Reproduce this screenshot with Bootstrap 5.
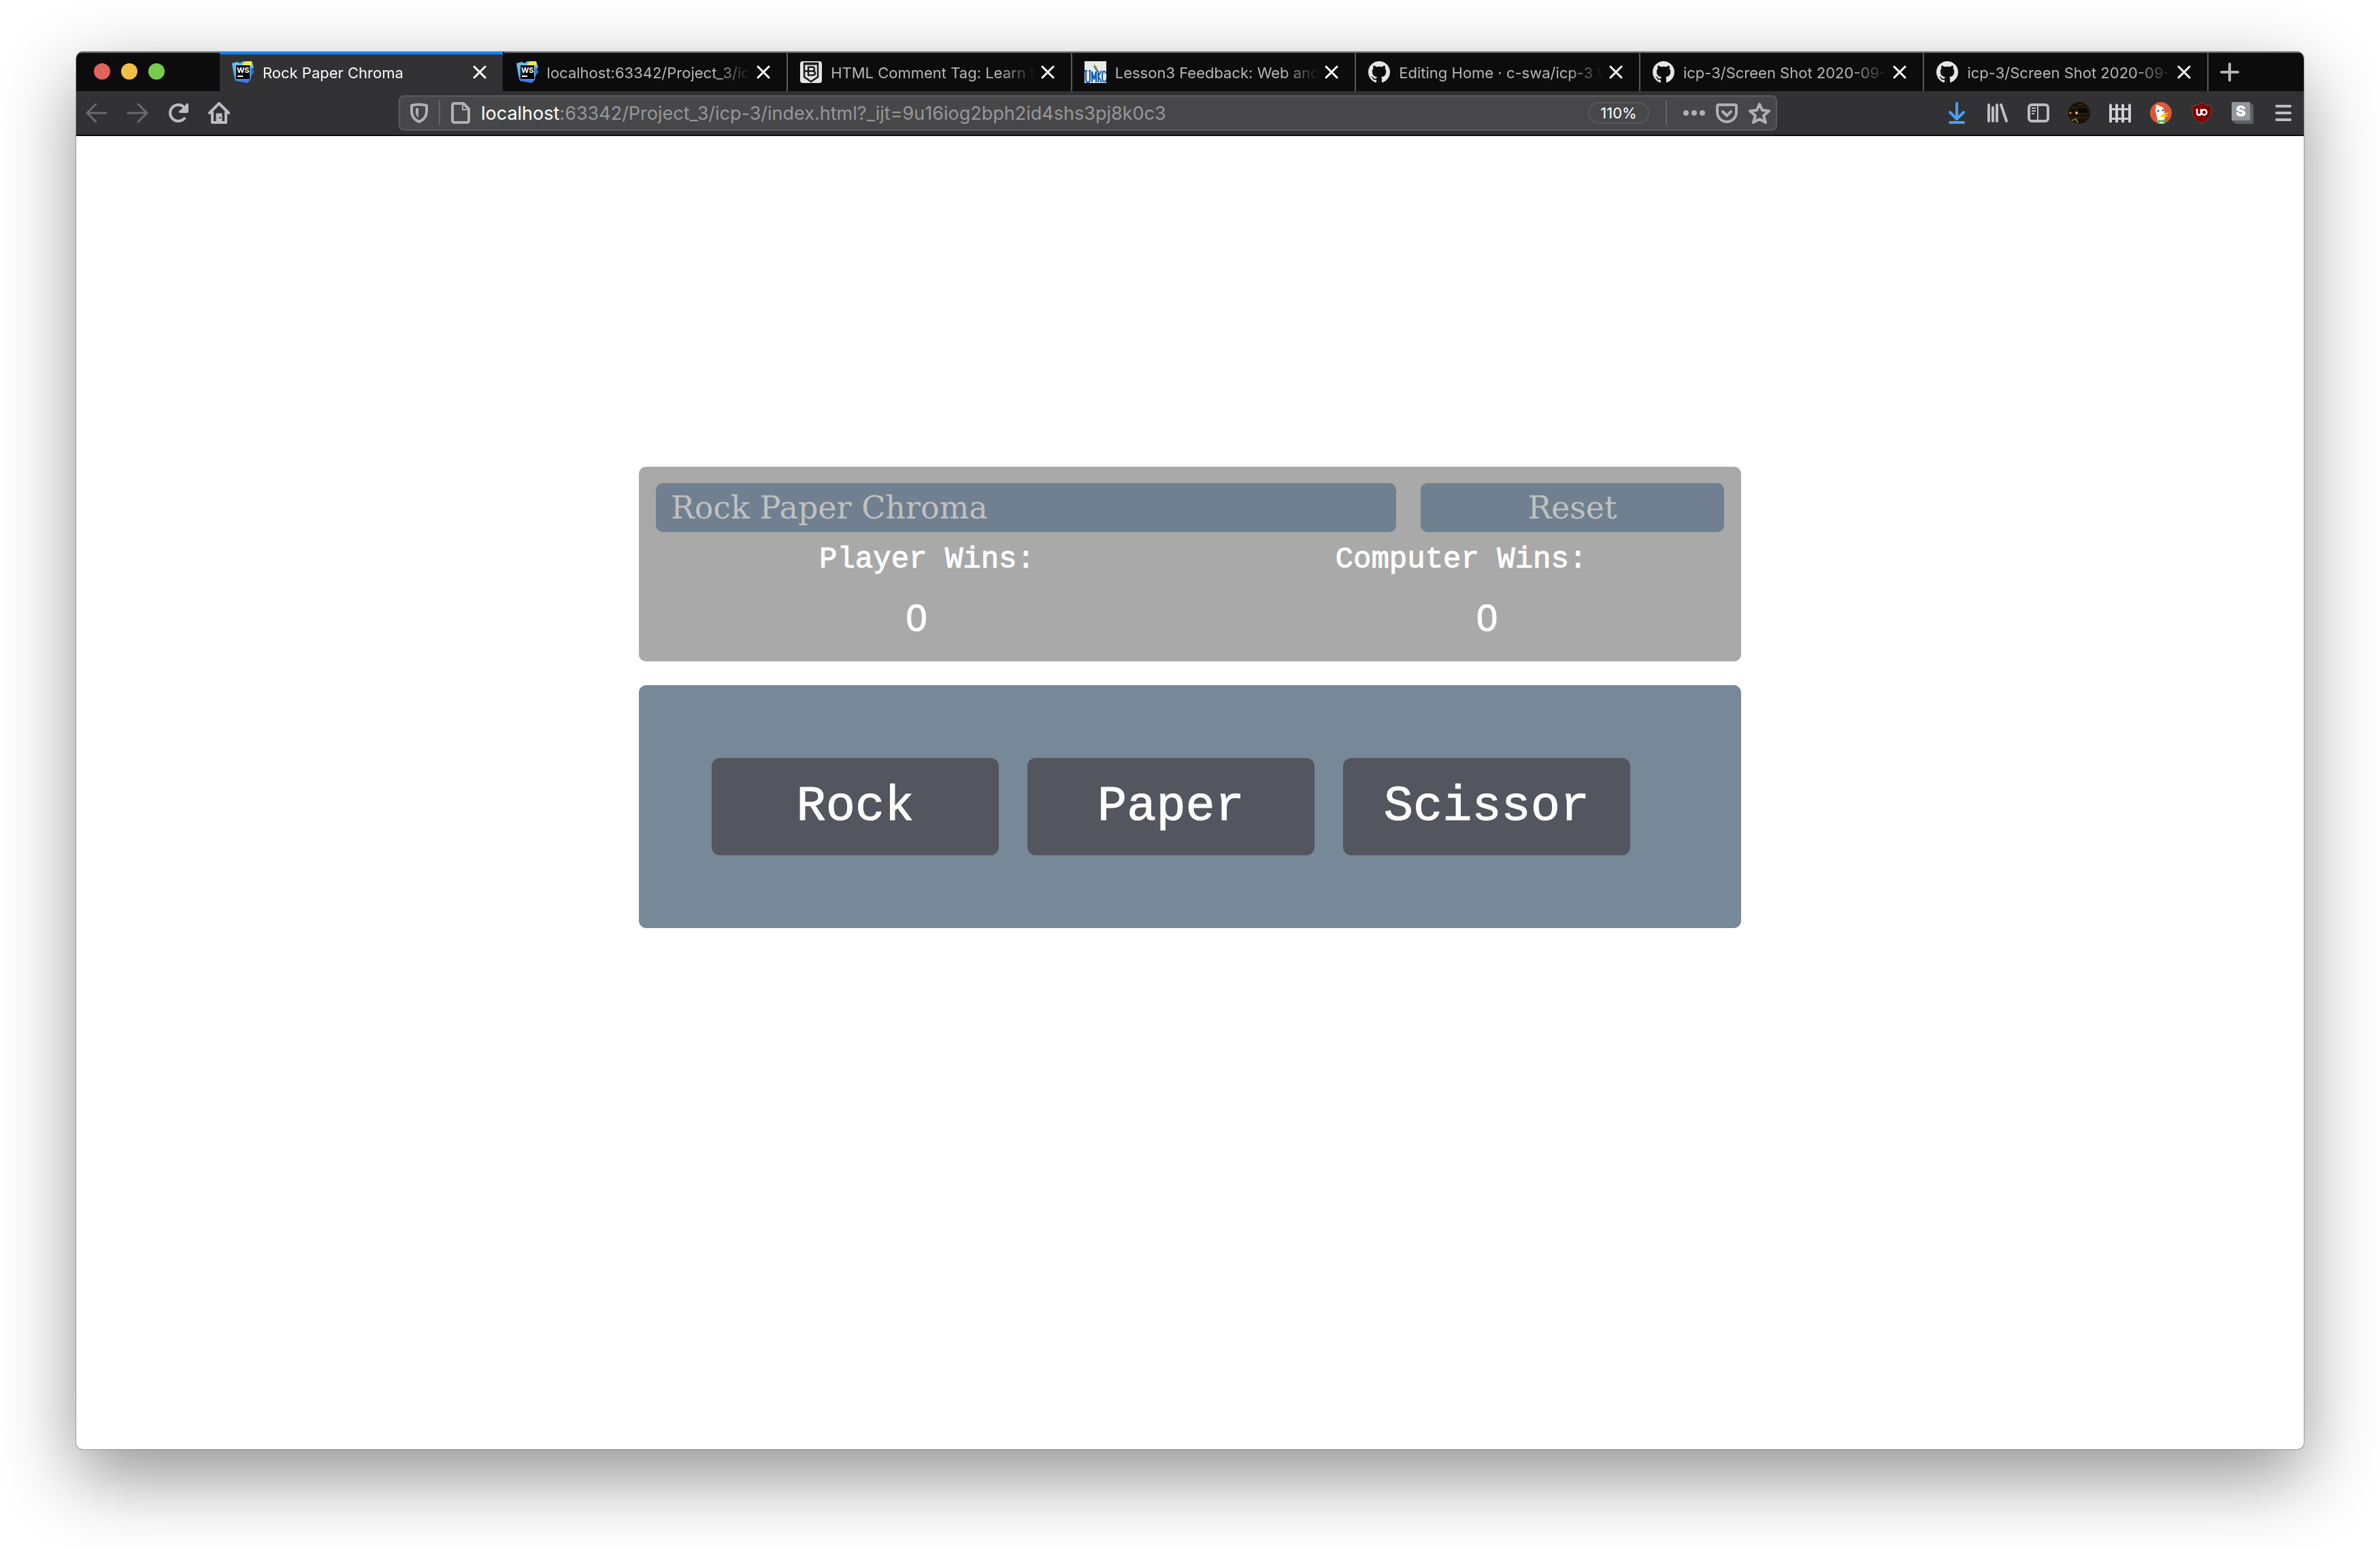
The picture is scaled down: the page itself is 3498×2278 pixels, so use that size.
<!DOCTYPE html>
<html lang="en">
<head>
<meta charset="utf-8">
<meta name="viewport" content="width=device-width, initial-scale=1">
<title>Rock Paper Chroma</title>
<link href="https://cdn.jsdelivr.net/npm/bootstrap@5.3.0/dist/css/bootstrap.min.css" rel="stylesheet">
<style>
  body { background: #fff; font-family: Inter, "Liberation Sans", sans-serif; }
  button, a { color: inherit; }
  .desktop { padding: 76px 112px 148px; }
  .window { border-radius: 10px; background: #fff; box-shadow: 0 0 0 1px rgba(0,0,0,.25), 0 40px 110px rgba(0,0,0,.43); }

  /* tab strip */
  .strip { height: 58px; background: #0c0c0d; box-shadow: inset 0 2px 0 #5e5e5e; }
  .lights { width: 211px; padding-left: 26px; gap: 16px; }
  .light { width: 24px; height: 24px; border: 0; padding: 0; border-radius: 50%; }
  .l-red { background: #e2635b; } .l-yellow { background: #f0bf43; } .l-green { background: #77cb4f; }
  .tab { flex: 1 1 0; min-width: 0; padding: 2px 22px 0 18px; border-right: 2px solid #5a5a5c; color: #b6b6b7; font-size: 22px; line-height: 32px; }
  .tab svg { flex: none; }
  .tab-on { background: #323234; color: #f9f9fa; border-right-color: #0c0c0d; box-shadow: inset 0 4px 0 #0a84ff; }
  .tab-name { flex: 1 1 0; min-width: 0; overflow: hidden; white-space: nowrap; margin: 0 6px 0 13px; padding-top: 2px; text-decoration: none;
    -webkit-mask-image: linear-gradient(to left, transparent, #000 52px); mask-image: linear-gradient(to left, transparent, #000 52px); }
  .x { color: #fff; width: 24px; height: 32px; padding: 0; border: 0; background: none; display: grid; place-items: center; }
  .end { width: 140px; }
  .plus { width: 62px; border: 0; padding: 2px 0 0; background: none; color: #b4b4b5; }

  /* toolbar */
  .tools { height: 66px; background: #323234; border-bottom: 2px solid #0c0c0d; color: #bdbdbe; }
  .tool { width: 60px; height: 60px; padding: 0; border: 0; background: none; display: grid; place-items: center; flex: none; }
  .tool:disabled { color: #6a6a6c; }
  .spacer { flex: 234 1 0; }
  .address { flex: 1999 1 0; min-width: 0; height: 52px; background: #474749; border: 2px solid #5c5c5e; border-radius: 8px; padding: 0 8px 0 15px; color: #b1b1b3; }
  .address .rule { width: 2px; height: 36px; background: #5f6670; }
  .url { flex: 1 1 0; min-width: 0; white-space: nowrap; overflow: hidden; font-size: 27px; line-height: 36px; padding-top: 2px; color: #97979a; }
  .url b { font-weight: 400; color: #fff; }
  .zoom { width: 90px; height: 32px; border: 2px solid #58585a; border-radius: 16px; background: none; color: #fff; font-size: 22px; line-height: 28px; padding: 0; }
  .mini { border: 0; padding: 0; background: none; width: 32px; height: 32px; display: grid; place-items: center; }

  /* game */
  .stage { padding: 486px 24px 24px; }
  .game { width: 100%; max-width: 1620px; gap: 35px; }
  .score { background: #a9a9a9; border-radius: 10px; padding: 24px 25px 18px; color: #fff; }
  .bar { background: #708090; color: #c0c0c0; border: 0; border-radius: 10px; font: 46px/72px "DejaVu Serif", serif; }
  .bar-row { gap: 36px; }
  .bar-title { flex: 1044 1 0; padding: 0 22px; margin: 0; }
  .bar-reset { flex: 446 1 0; padding: 0; }
  .who { font: 44px/80px "Liberation Mono", monospace; -webkit-text-stroke: 1px currentColor; }
  .who > div { padding-left: 12px; }
  .points { display: grid; grid-template-columns: 11fr 10fr; column-gap: 107px; font: 56px/92px "Liberation Sans", sans-serif; -webkit-text-stroke: 1px currentColor; }
  .moves { background: #778899; border-radius: 11px; padding: 107px 163px 107px 107px; gap: 42px; }
  .move { flex: 1 1 0; min-width: 0; height: 143px; border: 0; border-radius: 12px; background: #53565e; color: #fff; font: 72px/80px "Liberation Mono", monospace; padding: 0; -webkit-text-stroke: 1px currentColor; }
</style>
</head>
<body>
<svg class="position-absolute" width="0" height="0" aria-hidden="true">
  <defs>
    <linearGradient id="wsg" x1="0" y1="0" x2="0" y2="1"><stop offset="0" stop-color="#6cc4ee"/><stop offset=".6" stop-color="#58aee6"/><stop offset="1" stop-color="#3a6ce8"/></linearGradient>
  </defs>
  <symbol id="ws" viewBox="0 0 32 32">
    <path d="M0 3 8 1l4 2 4-3 13 1 3 7-2 4 2 4-4 5-1 6-4 5-18-3L3 22z" fill="url(#wsg)"/>
    <path d="M15 6 20 0h9l1 5-5 2z" fill="#f2e94e"/><path d="m27 12 2-3 3 6-4 7z" fill="#2f6fe0"/>
    <path d="M6 6h20v20H6z"/><path d="M8 22h8" stroke="#fff" stroke-width="2"/>
    <text x="7" y="17" font-family="Inter" font-weight="700" font-size="11" fill="#fff">WS</text>
  </symbol>
  <symbol id="gh" viewBox="0 0 16 16"><path fill="#e6e6e7" d="M8 0C3.58 0 0 3.58 0 8c0 3.54 2.29 6.53 5.47 7.59.4.07.55-.17.55-.38 0-.19-.01-.82-.01-1.49-2.01.37-2.53-.49-2.69-.94-.09-.23-.48-.94-.82-1.13-.28-.15-.68-.52-.01-.53.63-.01 1.08.58 1.23.82.72 1.21 1.87.87 2.33.66.07-.52.28-.87.51-1.07-1.78-.2-3.64-.89-3.64-3.95 0-.87.31-1.59.82-2.15-.08-.2-.36-1.02.08-2.12 0 0 .67-.21 2.2.82.64-.18 1.32-.27 2-.27.68 0 1.36.09 2 .27 1.53-1.04 2.2-.82 2.2-.82.44 1.1.16 1.92.08 2.12.51.56.82 1.27.82 2.15 0 3.07-1.87 3.75-3.65 3.95.29.25.54.73.54 1.48 0 1.07-.01 1.93-.01 2.2 0 .21.15.46.55.38A8.01 8.01 0 0 0 16 8c0-4.42-3.58-8-8-8z"/></symbol>
  <symbol id="cross" viewBox="0 0 20 20"><path d="m2 2 16 16M18 2 2 18" stroke="currentColor" stroke-width="3" stroke-linecap="round"/></symbol>
</svg>

<div class="desktop min-vh-100 d-flex flex-column">
  <div class="window flex-grow-1 d-flex flex-column overflow-hidden">

    <nav class="strip d-flex align-items-stretch" aria-label="Tabs">
      <div class="lights d-flex align-items-center">
        <button class="light l-red" aria-label="Close window"></button>
        <button class="light l-yellow" aria-label="Minimise"></button>
        <button class="light l-green" aria-label="Zoom window"></button>
      </div>
      <div class="tab tab-on d-flex align-items-center"><svg width="32" height="32"><use href="#ws"/></svg><a class="tab-name" href="#">Rock Paper Chroma</a><button class="x" aria-label="Close tab"><svg width="20" height="20"><use href="#cross"/></svg></button></div>
      <div class="tab d-flex align-items-center"><svg width="32" height="32"><use href="#ws"/></svg><a class="tab-name" href="#">localhost:63342/Project_3/ic</a><button class="x" aria-label="Close tab"><svg width="20" height="20"><use href="#cross"/></svg></button></div>
      <div class="tab d-flex align-items-center"><svg width="32" height="32" viewBox="0 0 32 32" fill="none" stroke="#1b1b1c"><rect width="32" height="32" rx="4" fill="#e6e6e7" stroke="none"/><path d="M6 3h20v20l-10 7-10-7z" stroke-width="2.5"/><path d="M5 4h22" stroke-width="3"/><path d="M12 8.500h6q3 0 3 3t-3 3h-6zm0 6h6q4 0 4 3t-4 3h-6zM7 14.500h5" stroke-width="2.500"/></svg><a class="tab-name" href="#">HTML Comment Tag: Learn t</a><button class="x" aria-label="Close tab"><svg width="20" height="20"><use href="#cross"/></svg></button></div>
      <div class="tab d-flex align-items-center"><svg width="32" height="32" viewBox="0 0 32 32"><path d="M0 0h32v32H0z" fill="#e9e9ea"/><path d="M13 3q6 4 7 11-5-2-7-11z" fill="#d9b51c"/><path d="m14 7 5 8" stroke="#0a5cb4" stroke-width="1.500"/><g fill="none" stroke="#0a5cb4" stroke-width="2"><path d="M0 14h4M6 14h3M2 14v13q0 4 3 4t3-4V14M11 31V15l3 12 3-12v16M20 14v17M25 14l-5 8 5 9M31 18q-1-4-3-3-2 1-2 8t3 7q2 0 3-3"/></g></svg><a class="tab-name" href="#">Lesson3 Feedback: Web and</a><button class="x" aria-label="Close tab"><svg width="20" height="20"><use href="#cross"/></svg></button></div>
      <div class="tab d-flex align-items-center"><svg width="32" height="32"><use href="#gh"/></svg><a class="tab-name" href="#">Editing Home · c-swa/icp-3 W</a><button class="x" aria-label="Close tab"><svg width="20" height="20"><use href="#cross"/></svg></button></div>
      <div class="tab d-flex align-items-center"><svg width="32" height="32"><use href="#gh"/></svg><a class="tab-name" href="#">icp-3/Screen Shot 2020-09-</a><button class="x" aria-label="Close tab"><svg width="20" height="20"><use href="#cross"/></svg></button></div>
      <div class="tab d-flex align-items-center"><svg width="32" height="32"><use href="#gh"/></svg><a class="tab-name" href="#">icp-3/Screen Shot 2020-09-</a><button class="x" aria-label="Close tab"><svg width="20" height="20"><use href="#cross"/></svg></button></div>
      <div class="end d-flex"><button class="plus" aria-label="New tab"><svg width="28" height="28" viewBox="0 0 28 28"><path d="M14 2v24M2 14h24" stroke="currentColor" stroke-width="4" stroke-linecap="round"/></svg></button></div>
    </nav>

    <div class="tools d-flex align-items-center">
      <button class="tool" disabled aria-label="Back"><svg width="32" height="32" viewBox="0 0 32 32" fill="none" stroke="currentColor" stroke-width="3" stroke-linecap="round" stroke-linejoin="round"><path d="M30 16H2M15 3 2 16l13 13"/></svg></button>
      <button class="tool" disabled aria-label="Forward"><svg width="32" height="32" viewBox="0 0 32 32" fill="none" stroke="currentColor" stroke-width="3" stroke-linecap="round" stroke-linejoin="round"><path d="M2 16h28M17 3l13 13-13 13"/></svg></button>
      <button class="tool" aria-label="Reload"><svg width="32" height="32" viewBox="0 0 32 32" fill="none" stroke="currentColor" stroke-width="4" stroke-linecap="round"><path d="M25 24A12 12 0 1 1 25 8"/><path d="M29 4v10H19" stroke-linejoin="round"/><path d="M28 6v7h-7z" fill="currentColor"/></svg></button>
      <button class="tool" aria-label="Home"><svg width="32" height="32" viewBox="0 0 32 32" fill="none" stroke="currentColor" stroke-width="4" stroke-linecap="round" stroke-linejoin="round"><path d="M2 16 16 2l14 14M6 15v15h20V15"/><path d="M12 29V17h8v12" fill="currentColor" stroke-width="1"/><path d="M17 23h1" stroke="#323234" stroke-width="2"/></svg></button>
      <div class="spacer"></div>
      <div class="address d-flex align-items-center">
        <svg width="26" height="30" viewBox="0 0 26 30" fill="none" stroke="currentColor" stroke-width="4" stroke-linejoin="round"><path d="M2 4q11-3 22 0v9q0 10-11 15Q2 23 2 13z"/><path d="M12 8v14q-4-3-4-9V8z" fill="currentColor" stroke="none"/></svg>
        <span class="rule ms-3"></span>
        <svg class="mx-3" width="28" height="32" viewBox="0 0 28 32" fill="none" stroke="currentColor" stroke-width="4" stroke-linejoin="round"><path d="M5 2h13l8 8v17q0 3-3 3H5q-3 0-3-3V5q0-3 3-3z"/><path d="M17 3v8h8" stroke-width="2"/></svg>
        <span class="url"><b>localhost</b>:63342/Project_3/icp-3/index.html?_ijt=9u16iog2bph2id4shs3pj8k0c3</span>
        <button class="zoom">110%</button>
        <span class="rule mx-4"></span>
        <div class="d-flex gap-3 ms-n2">
          <button class="mini" aria-label="Page actions"><svg width="32" height="10" viewBox="0 0 32 10" fill="currentColor"><circle cx="4" cy="5" r="4"/><circle cx="16" cy="5" r="4"/><circle cx="28" cy="5" r="4"/></svg></button>
          <button class="mini" aria-label="Save to Pocket"><svg width="32" height="30" viewBox="0 0 32 30" fill="none" stroke="currentColor" stroke-width="4" stroke-linecap="round" stroke-linejoin="round"><path d="M4 3h24q2 0 2 2v9a14 14 0 0 1-28 0V5q0-2 2-2z"/><path d="m10 13 6 6 6-6"/></svg></button>
          <button class="mini" aria-label="Bookmark"><svg width="32" height="32" viewBox="0 0 32 32" fill="none" stroke="currentColor" stroke-width="4" stroke-linejoin="round"><path d="m16 3 4 9 10 1-8 7 3 10-9-5-9 5 3-10-8-7 10-1z"/></svg></button>
        </div>
      </div>
      <div class="spacer"></div>
      <button class="tool" aria-label="Downloads"><svg width="24" height="32" viewBox="0 0 24 32" fill="none" stroke="#45a1ff" stroke-width="4" stroke-linecap="round" stroke-linejoin="round"><path d="M12 2v22M2 15l10 10 10-10M2 30h20"/></svg></button>
      <button class="tool" aria-label="Library"><svg width="32" height="32" viewBox="0 0 32 32" stroke="currentColor" stroke-width="4" stroke-linecap="round"><path d="M3 4v24M9 8v20M15 4v24M21 4l8 24"/></svg></button>
      <button class="tool" aria-label="Sidebar"><svg width="32" height="32" viewBox="0 0 32 32" fill="none" stroke="currentColor"><rect x="2" y="4" width="28" height="24" rx="4" stroke-width="4"/><path d="M15 5v22M6 9h6M6 13h6M6 17h4" stroke-width="2"/></svg></button>
      <button class="tool" aria-label="Account"><svg width="32" height="32" viewBox="0 0 32 32"><circle cx="16" cy="16" r="16" fill="#1b1208"/><path d="M12 8h16l2 9H14zM3 23h26" fill="#0b0806" stroke="#3d2b12"/><path d="M5 8h5M14 4h8" stroke="#5a3d18"/><circle cx="3" cy="16" r="1.500" fill="#ff8a5c"/><circle cx="12" cy="16" r="2" fill="#ffb08a"/><path d="M5 27l6-2 3 6" fill="none" stroke="#6b7a2a" stroke-width="2"/></svg></button>
      <button class="tool" aria-label="Containers"><svg width="32" height="32" viewBox="0 0 32 32"><path fill="#d0d0d2" d="M0 4l2-2 2 2v26H0zM9 4l2-2 2 2v26H9zM18 4l2-2 2 2v26h-4zM28 4l2-2 2 2v26h-4zM0 9h32v3H0zM0 23h32v3H0z"/></svg></button>
      <button class="tool" aria-label="DuckDuckGo"><svg width="32" height="32" viewBox="0 0 32 32"><circle cx="16" cy="16" r="16" fill="#de5833"/><path d="M12 31 8 13q-1-7 5-7 8 0 8 8l1 17q-5 1-10 0z" fill="#fff"/><path d="M8 5q4-2 6 1l-3 3z" fill="#fff"/><circle cx="12" cy="13" r="1.500" fill="#2d4f8e"/><circle cx="19" cy="12" r="1.500" fill="#2d4f8e"/><path d="M16 20q5-4 12-5-2 3-7 4 4 1 6 0-3 4-9 3-3 0-2-2z" fill="#fdd20a"/><path d="m12 26 5 1 5-2v6l-5-2-5 2z" fill="#4cb846"/></svg></button>
      <button class="tool" aria-label="uBlock Origin"><svg width="32" height="32" viewBox="0 0 32 32"><path d="M16 1q6 4 14 5v8q0 12-14 17Q2 26 2 14V6q8-1 14-5z" fill="#800000" stroke="#7a4a4a"/><g fill="none" stroke="#fff" stroke-width="2.500"><path d="M9 10v6q0 3 3 3t3-3v-6"/><circle cx="19.500" cy="15" r="3.800"/></g></svg></button>
      <button class="tool" aria-label="Stylus"><svg width="32" height="32" viewBox="0 0 32 32"><path d="M26 0l6 5v27H6l-6-5z" fill="#5e6167"/><path d="M0 0h27v27H0z" fill="#94969b"/><text x="6" y="21" font-family="Inter" font-weight="900" font-size="22" fill="#fff">S</text></svg></button>
      <button class="tool" aria-label="Menu"><svg width="24" height="26" viewBox="0 0 24 26" stroke="currentColor" stroke-width="4" stroke-linecap="round"><path d="M2 3h20M2 13h20M2 23h20"/></svg></button>
    </div>

    <main class="stage d-flex justify-content-center">
      <div class="game d-flex flex-column">
        <section class="score">
          <div class="bar-row d-flex">
            <h1 class="bar bar-title">Rock Paper Chroma</h1>
            <button class="bar bar-reset">Reset</button>
          </div>
          <div class="who row g-0 text-center">
            <div class="col-6">Player Wins:</div>
            <div class="col-6">Computer Wins:</div>
          </div>
          <div class="points text-center"><div>0</div><div>0</div></div>
        </section>
        <section class="moves d-flex">
          <button class="move">Rock</button>
          <button class="move">Paper</button>
          <button class="move">Scissor</button>
        </section>
      </div>
    </main>
  </div>
</div>
<script src="https://cdn.jsdelivr.net/npm/bootstrap@5.3.0/dist/js/bootstrap.bundle.min.js"></script>
</body>
</html>
